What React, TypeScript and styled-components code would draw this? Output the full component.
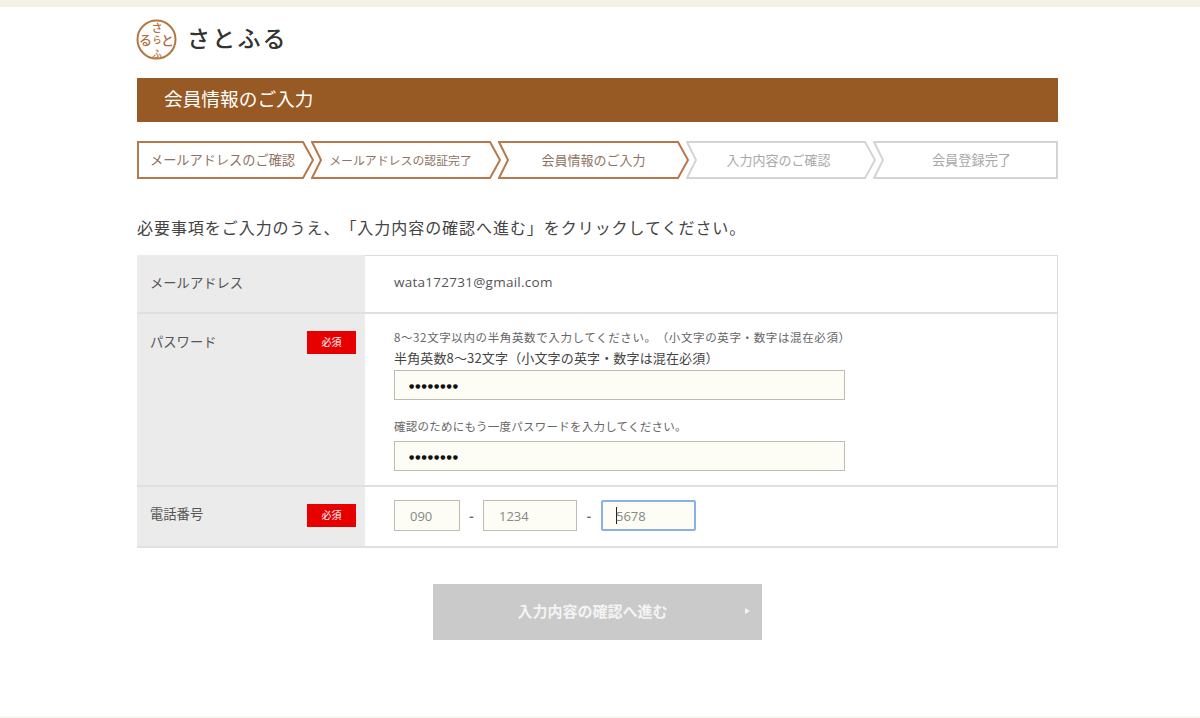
import React from "react";
import styled, { createGlobalStyle } from "styled-components";

const Global = createGlobalStyle`
  html, body { margin: 0; padding: 0; background: #fff; }
  body {
    font-family: "Noto Sans CJK JP", "Noto Sans", sans-serif;
    color: #444;
    text-spacing-trim: space-all;
  }
  * { box-sizing: border-box; }
`;

const Page = styled.div`
  width: 1200px;
  height: 718px;
  display: flex;
  flex-direction: column;
  overflow: hidden;
  border-top: 7px solid #f5f1e6;
  border-bottom: 2px solid #f8f7f0;
`;

const Container = styled.main`
  width: 921px;
  margin-left: 137px;
  display: flex;
  flex-direction: column;
`;

const Brand = styled.div`
  height: 71px;
  margin-left: -1px;
  padding-top: 12px;
  display: flex;
  align-items: flex-start;
  gap: 9px;
`;

const BrandName = styled.div`
  font-family: "Noto Sans CJK JP", serif;
  font-size: 23px;
  font-weight: 500;
  line-height: 37px;
  letter-spacing: 2.2px;
  color: #333;
`;

const Title = styled.h1`
  margin: 0;
  height: 44px;
  background: #985a24;
  color: #fff;
  font-size: 18.7px;
  font-weight: 400;
  line-height: 39px;
  padding-left: 27px;
  white-space: nowrap;
`;

const Steps = styled.ol`
  list-style: none;
  margin: 19px 0 0;
  padding: 0;
  height: 38px;
  display: flex;
`;

const StepItem = styled.li<{ $w: number; $on: boolean; $shift: number; $size: number }>`
  position: relative;
  isolation: isolate;
  flex: none;
  width: ${(p) => p.$w}px;
  margin-right: -3px;
  padding-left: ${(p) => Math.max(p.$shift, 0)}px;
  padding-right: ${(p) => Math.max(-p.$shift, 0)}px;
  text-align: center;
  font-size: ${(p) => p.$size}px;
  line-height: 37px;
  color: ${(p) => (p.$on ? "#8f7263" : "#a8a8a8")};
  white-space: nowrap;
  &:last-child { margin-right: 0; }
`;

const StepShape = styled.svg`
  position: absolute;
  inset: 0;
  width: 100%;
  height: 100%;
  z-index: -1;
`;

const Lead = styled.p`
  margin: 36px 0 2px;
  height: 38px;
  font-size: 16px;
  line-height: 24px;
  letter-spacing: 0.95px;
  color: #444;
  white-space: nowrap;
`;

const Form = styled.div`
  border: solid #ddd;
  border-width: 1px 1px 0 0;
`;

const Row = styled.div<{ $h: number }>`
  display: flex;
  height: ${(p) => p.$h}px;
  border-bottom: 2px solid #e0e0e0;
`;

const Label = styled.div<{ $top: number }>`
  width: 228px;
  flex: none;
  background: #ebebeb;
  padding: ${(p) => p.$top}px 9px 0 13px;
  display: flex;
  justify-content: space-between;
  align-items: flex-start;
  font-size: 13.3px;
  line-height: 24px;
  color: #555;
  ${Row}:first-child & { margin-top: -1px; }
`;

const Required = styled.span<{ $mt: number }>`
  width: 49px;
  height: 23px;
  margin-top: ${(p) => p.$mt}px;
  background: #e60000;
  color: #fff;
  font-size: 10px;
  line-height: 22px;
  text-align: center;
`;

const Field = styled.div<{ $top: number }>`
  flex: 1;
  padding: ${(p) => p.$top}px 0 0 29px;
  display: flex;
  flex-direction: column;
  align-items: flex-start;
`;

const Email = styled.div`
  font-family: "Open Sans", "Noto Sans", sans-serif;
  font-size: 13.5px;
  line-height: 24px;
  letter-spacing: 0.26px;
  color: #555;
`;

const Hint = styled.div<{ $mt?: number; $ls: number }>`
  font-size: 11.5px;
  line-height: 16px;
  margin-top: ${(p) => p.$mt ?? 0}px;
  letter-spacing: ${(p) => p.$ls}px;
  color: #666;
  white-space: nowrap;
`;

const SubHint = styled.div`
  font-size: 13px;
  line-height: 18px;
  letter-spacing: 0.15px;
  margin: 4px 0 3px;
  color: #444;
  white-space: nowrap;
`;

const TextBox = styled.div<{ $w: number; $h?: number; $focus?: boolean; $mt?: number }>`
  width: ${(p) => p.$w}px;
  height: ${(p) => p.$h ?? 31}px;
  margin-top: ${(p) => p.$mt ?? 0}px;
  background: #fdfcf5;
  border: ${(p) => (p.$focus ? "2px solid #8ab0ea" : "1.5px solid #bdbdb5")};
  border-radius: ${(p) => (p.$focus ? 2 : 0)}px;
  padding-left: ${(p) => (p.$focus ? 13 : 15)}px;
  display: flex;
  align-items: center;
  font-family: "Open Sans", "Noto Sans", sans-serif;
  font-size: 13px;
  color: #888;
`;

const Dots = styled.span`
  margin-left: -1px;
  color: #111;
  font-family: "DejaVu Sans", sans-serif;
  font-size: 6px;
  letter-spacing: 1px;
`;

const Caret = styled.span`
  width: 1px;
  height: 17px;
  background: #222;
  margin-right: -1px;
`;

const PhoneRow = styled.div`
  display: flex;
  align-items: center;
`;

const Dash = styled.span<{ $w: number }>`
  width: ${(p) => p.$w}px;
  text-align: center;
  font-size: 13px;
  font-weight: 700;
  color: #666;
`;

const Actions = styled.div`
  display: flex;
  margin: 36px 0 0 296px;
`;

const Submit = styled.button`
  position: relative;
  width: 329px;
  height: 56px;
  border: 0;
  padding: 0 10px 4px 0;
  background: #cacaca;
  color: #f4f4f4;
  font-family: inherit;
  font-size: 15px;
  font-weight: 700;
  display: flex;
  align-items: center;
  justify-content: center;
`;

const SubmitArrow = styled.span`
  position: absolute;
  right: 12px;
  top: 24px;
  width: 0;
  height: 0;
  border-left: 5px solid #f4f4f4;
  border-top: 3px solid transparent;
  border-bottom: 3px solid transparent;
`;

const Stamp = () => (
  <svg width="42" height="42" viewBox="0 0 42 42" role="img" aria-label="さとふる">
    <circle cx="20.5" cy="20.5" r="19" fill="#fff" stroke="#b5763f" strokeWidth="2" />
    <g fill="#b0703a" fontFamily="Noto Sans CJK JP, sans-serif" fontWeight="500">
      <text x="21" y="12.5" fontSize="11" textAnchor="middle">さ</text>
      <text x="9.5" y="26" fontSize="13" textAnchor="middle">る</text>
      <text x="31.5" y="26" fontSize="13" textAnchor="middle">と</text>
      <text x="21" y="23.5" fontSize="9" textAnchor="middle">ら</text>
      <text x="21" y="38" fontSize="9.5" textAnchor="middle">ふ</text>
    </g>
  </svg>
);

const steps = [
  { label: "メールアドレスのご確認", w: 177, on: true, shift: -6, size: 13.2 },
  { label: "メールアドレスの認証完了", w: 190, on: true, shift: -11, size: 11.9 },
  { label: "会員情報のご入力", w: 191, on: true, shift: 0, size: 13 },
  { label: "入力内容のご確認", w: 190, on: false, shift: -5, size: 13 },
  { label: "会員登録完了", w: 185, on: false, shift: 12, size: 13.2 },
];

export default function App() {
  return (
    <Page>
      <Global />
      <Container>
        <Brand>
          <Stamp />
          <BrandName>さとふる</BrandName>
        </Brand>
        <Title>会員情報のご入力</Title>
        <Steps>
          {steps.map((s, i) => {
            const last = i === steps.length - 1;
            const r = s.w - 1;
            const n = r - 10;
            const pts = last
              ? `1,1 ${r},1 ${r},37 1,37 10,19`
              : i === 0
              ? `1,1 ${n},1 ${r},19 ${n},37 1,37`
              : `1,1 ${n},1 ${r},19 ${n},37 1,37 10,19`;
            return (
              <StepItem key={s.label} $w={s.w} $on={s.on} $shift={s.shift} $size={s.size}>
                <StepShape viewBox={`0 0 ${s.w} 38`}>
                  <polygon
                    points={pts}
                    fill="none"
                    stroke={s.on ? "#b5794a" : "#d4d4d4"}
                    strokeWidth="2"
                  />
                </StepShape>
                {s.label}
              </StepItem>
            );
          })}
        </Steps>
        <Lead>必要事項をご入力のうえ、「入力内容の確認へ進む」をクリックしてください。</Lead>
        <Form>
          <Row $h={58}>
            <Label $top={16}>メールアドレス</Label>
            <Field $top={14}>
              <Email>wata172731@gmail.com</Email>
            </Field>
          </Row>
          <Row $h={173}>
            <Label $top={16}>
              パスワード
              <Required $mt={1}>必須</Required>
            </Label>
            <Field $top={15}>
              <Hint $ls={0.62}>8～32文字以内の半角英数で入力してください。（小文字の英字・数字は混在必須）</Hint>
              <SubHint>半角英数8～32文字（小文字の英字・数字は混在必須）</SubHint>
              <TextBox $w={451} $h={30}>
                <Dots>●●●●●●●●</Dots>
              </TextBox>
              <Hint $mt={18} $ls={0.25}>確認のためにもう一度パスワードを入力してください。</Hint>
              <TextBox $w={451} $h={30} $mt={7}>
                <Dots>●●●●●●●●</Dots>
              </TextBox>
            </Field>
          </Row>
          <Row $h={61}>
            <Label $top={15}>
              電話番号
              <Required $mt={2}>必須</Required>
            </Label>
            <Field $top={13}>
              <PhoneRow>
                <TextBox $w={66}>090</TextBox>
                <Dash $w={23}>-</Dash>
                <TextBox $w={94}>1234</TextBox>
                <Dash $w={24}>-</Dash>
                <TextBox $w={95} $focus>
                  <Caret />
                  5678
                </TextBox>
              </PhoneRow>
            </Field>
          </Row>
        </Form>
        <Actions>
          <Submit type="button">
            入力内容の確認へ進む
            <SubmitArrow />
          </Submit>
        </Actions>
      </Container>
    </Page>
  );
}
